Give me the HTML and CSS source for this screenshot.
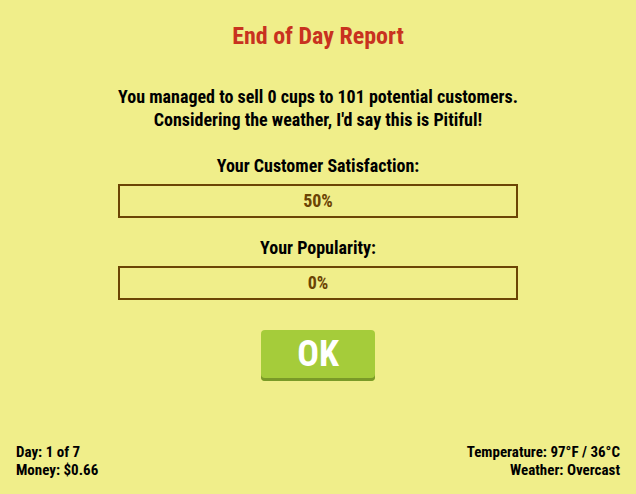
FILE: index.html
```html
<!DOCTYPE html>
<html>
 <head>
  <meta charset="UTF-8">
  <title>End of Day Report</title>
  <link rel="stylesheet" href="styles.css">
 </head>
 <body>
  <div class="report">
   <h1 class="title">End of Day Report</h1>
   <p class="summary">You managed to sell 0 cups to 101 potential customers.<br>Considering the weather, I'd say this is Pitiful!</p>
   <div class="stat">
    <div class="label">Your Customer Satisfaction:</div>
    <div class="bar">50%</div>
   </div>
   <div class="stat">
    <div class="label">Your Popularity:</div>
    <div class="bar">0%</div>
   </div>
   <button class="ok">OK</button>
  </div>
  <div class="status">
   <div class="left">
    <div>Day: 1 of 7</div>
    <div>Money: $0.66</div>
   </div>
   <div class="right">
    <div>Temperature: 97°F / 36°C</div>
    <div>Weather: Overcast</div>
   </div>
  </div>
 </body>
</html>
```

FILE: styles.css
```css
html, body {
 height: 100%;
}
body {
 margin: 0;
 background-color: #f0ee8a;
 font-family: "Roboto Condensed", "Liberation Sans Narrow", Roboto, sans-serif;
 font-weight: bold;
 color: #000;
 display: flex;
 flex-direction: column;
}
.report {
 flex: 1;
 display: flex;
 flex-direction: column;
 align-items: center;
 text-align: center;
}
.title {
 margin: 21px 0 0;
 font-size: 24px;
 line-height: 30px;
 color: #c8321f;
}
.summary {
 margin: 34px 0 0;
 font-size: 18px;
 line-height: 23px;
}
.stat {
 width: 400px;
 margin-top: 24px;
}
.stat + .stat {
 margin-top: 19px;
}
.label {
 font-size: 18px;
 line-height: 22px;
}
.bar {
 margin-top: 7px;
 height: 30px;
 line-height: 30px;
 border: 2px solid #6b4404;
 color: #6b4404;
 font-size: 18px;
}
.ok {
 margin-top: 30px;
 width: 114px;
 height: 51px;
 border: none;
 border-radius: 4px;
 background-color: #a5cc3a;
 box-shadow: inset 0 -3px 0 #7a9a28;
 color: #fff;
 font-family: inherit;
 font-weight: bold;
 font-size: 36px;
 padding: 0 0 3px;
 cursor: pointer;
}
.status {
 display: flex;
 justify-content: space-between;
 padding: 0 16px 15px;
 font-size: 15px;
 line-height: 18px;
}
.right {
 text-align: right;
}
```
